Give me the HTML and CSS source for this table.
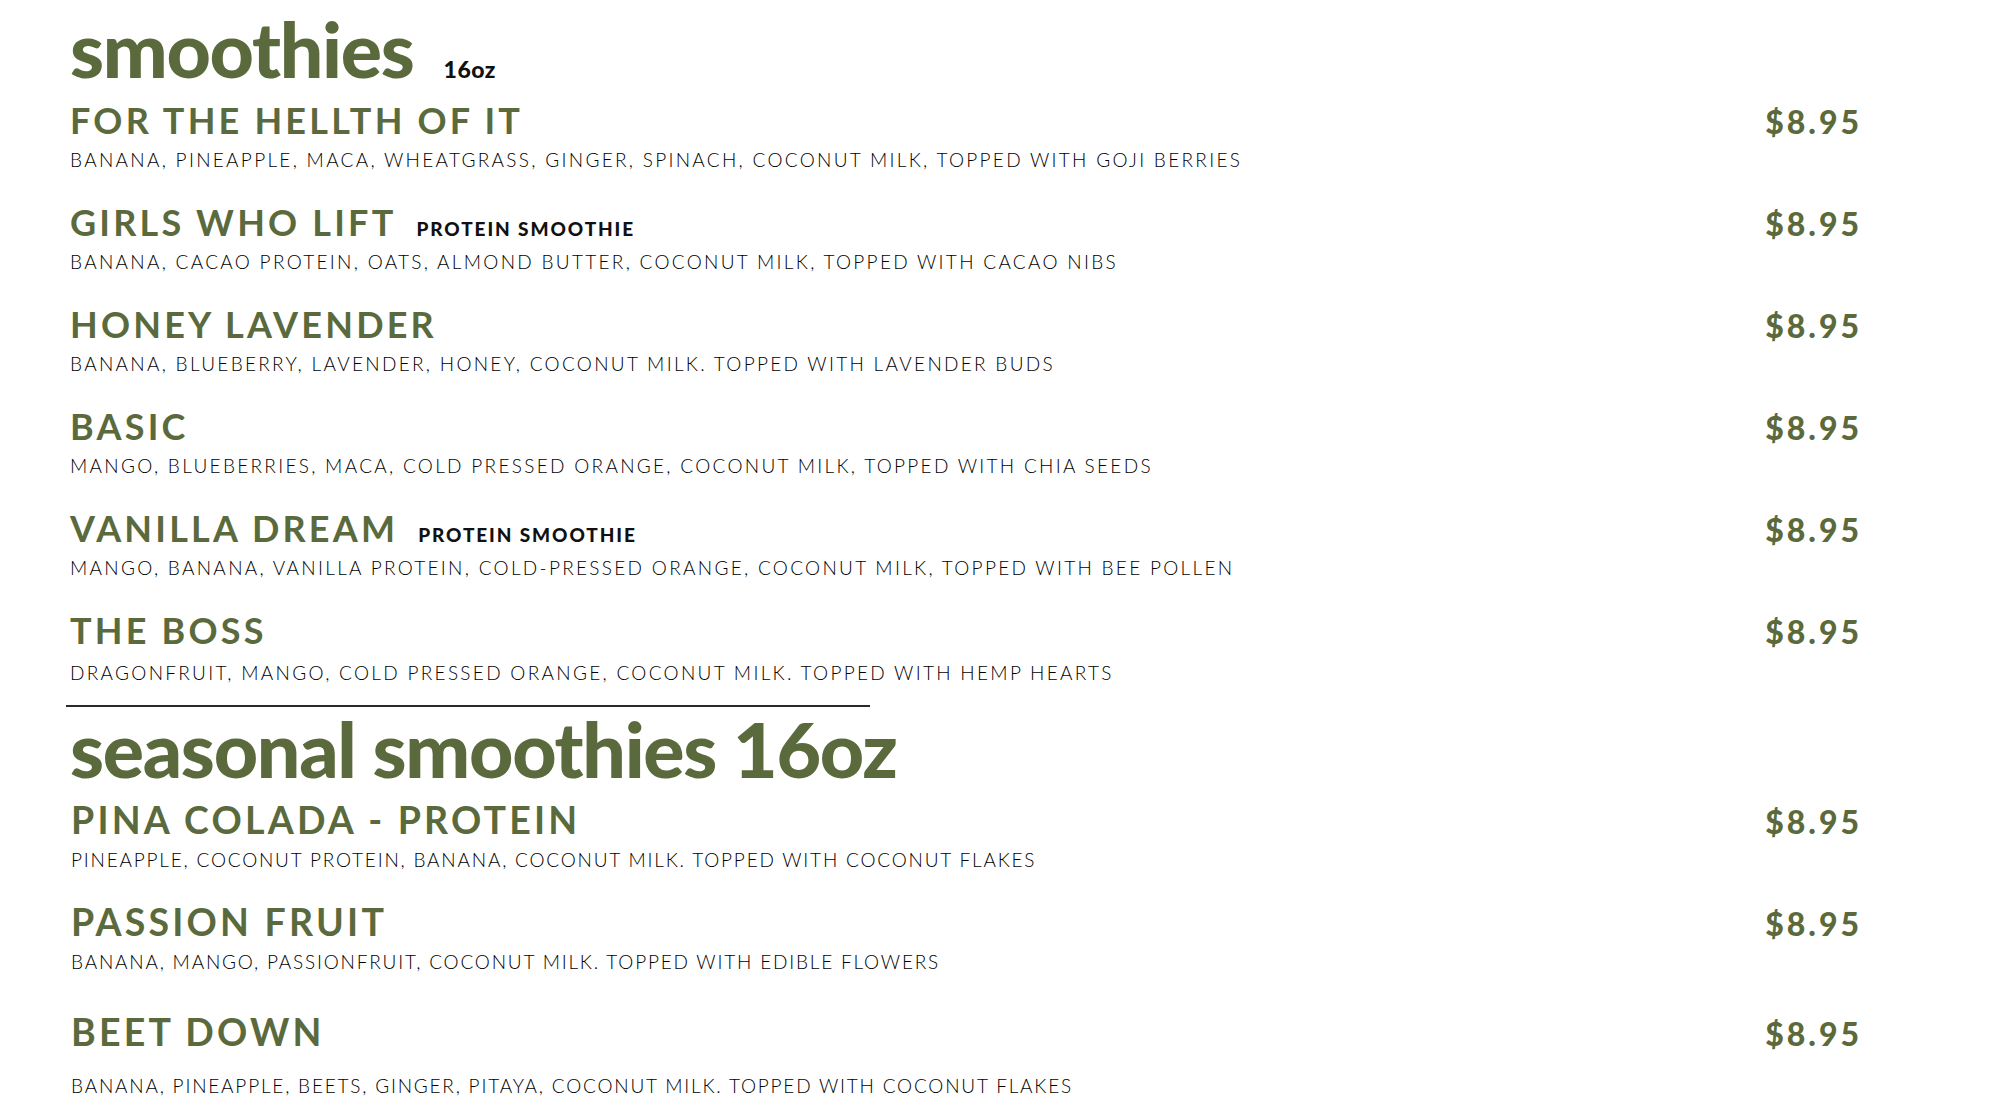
FILE: index.html
```html
<!DOCTYPE html>
<html lang="en">
<head>
<meta charset="utf-8">
<title>Smoothies Menu</title>
<link rel="stylesheet" href="styles.css">
</head>
<body>
<main class="menu">
  <section class="section">
    <h1 class="section-title">smoothies <span class="size">16oz</span></h1>
    <div class="item">
      <div class="item-head"><h2 class="name">FOR THE HELLTH OF IT</h2><span class="price">$8.95</span></div>
      <p class="desc">BANANA, PINEAPPLE, MACA, WHEATGRASS, GINGER, SPINACH, COCONUT MILK, TOPPED WITH GOJI BERRIES</p>
    </div>
    <div class="item">
      <div class="item-head"><h2 class="name">GIRLS WHO LIFT <span class="tag">PROTEIN SMOOTHIE</span></h2><span class="price">$8.95</span></div>
      <p class="desc">BANANA, CACAO PROTEIN, OATS, ALMOND BUTTER, COCONUT MILK, TOPPED WITH CACAO NIBS</p>
    </div>
    <div class="item">
      <div class="item-head"><h2 class="name">HONEY LAVENDER</h2><span class="price">$8.95</span></div>
      <p class="desc">BANANA, BLUEBERRY, LAVENDER, HONEY, COCONUT MILK. TOPPED WITH LAVENDER BUDS</p>
    </div>
    <div class="item">
      <div class="item-head"><h2 class="name">BASIC</h2><span class="price">$8.95</span></div>
      <p class="desc">MANGO, BLUEBERRIES, MACA, COLD PRESSED ORANGE, COCONUT MILK, TOPPED WITH CHIA SEEDS</p>
    </div>
    <div class="item">
      <div class="item-head"><h2 class="name">VANILLA DREAM <span class="tag">PROTEIN SMOOTHIE</span></h2><span class="price">$8.95</span></div>
      <p class="desc">MANGO, BANANA, VANILLA PROTEIN, COLD-PRESSED ORANGE, COCONUT MILK, TOPPED WITH BEE POLLEN</p>
    </div>
    <div class="item item--spaced">
      <div class="item-head"><h2 class="name">THE BOSS</h2><span class="price">$8.95</span></div>
      <p class="desc">DRAGONFRUIT, MANGO, COLD PRESSED ORANGE, COCONUT MILK. TOPPED WITH HEMP HEARTS</p>
    </div>
  </section>
  <hr class="divider">
  <section class="section section--seasonal">
    <h1 class="section-title">seasonal smoothies 16oz</h1>
    <div class="item">
      <div class="item-head"><h2 class="name">PINA COLADA - PROTEIN</h2><span class="price">$8.95</span></div>
      <p class="desc">PINEAPPLE, COCONUT PROTEIN, BANANA, COCONUT MILK. TOPPED WITH COCONUT FLAKES</p>
    </div>
    <div class="item">
      <div class="item-head"><h2 class="name">PASSION FRUIT</h2><span class="price">$8.95</span></div>
      <p class="desc">BANANA, MANGO, PASSIONFRUIT, COCONUT MILK. TOPPED WITH EDIBLE FLOWERS</p>
    </div>
    <div class="item item--loose">
      <div class="item-head"><h2 class="name">BEET DOWN</h2><span class="price">$8.95</span></div>
      <p class="desc">BANANA, PINEAPPLE, BEETS, GINGER, PITAYA, COCONUT MILK. TOPPED WITH COCONUT FLAKES</p>
    </div>
  </section>
</main>
</body>
</html>
```
FILE: styles.css
```css
html, body {
  margin: 0;
  padding: 0;
  background: #ffffff;
}

body {
  font-family: "Lato", "Liberation Sans", sans-serif;
  color: #000000;
}

.menu {
  padding: 7px 138px 0 70px;
}

.section {
  display: flex;
  flex-direction: column;
  gap: 30px;
}

.section-title {
  margin: 0 0 -20px 0;
  font-family: "Lato", sans-serif;
  font-weight: 900;
  font-size: 77px;
  line-height: 83px;
  letter-spacing: -1.3px;
  color: #5b6a3c;
  display: flex;
  align-items: baseline;
  gap: 30px;
}

.size {
  font-size: 23px;
  line-height: 23px;
  font-weight: 900;
  letter-spacing: 0.5px;
  color: #111111;
}

.item {
  display: flex;
  flex-direction: column;
  gap: 6px;
}

.item--spaced {
  gap: 9px;
}

.item--loose {
  margin-top: 8px;
  gap: 20px;
}

.item-head {
  display: flex;
  justify-content: space-between;
  align-items: baseline;
}

.name {
  margin: 0;
  font-size: 36px;
  line-height: 40px;
  font-weight: 700;
  letter-spacing: 3.2px;
  color: #5b6a3c;
  display: flex;
  align-items: baseline;
  gap: 20px;
}

.tag {
  font-size: 19px;
  line-height: 20px;
  font-weight: 900;
  letter-spacing: 1.9px;
  color: #111111;
}

.price {
  font-size: 32px;
  line-height: 40px;
  font-weight: 900;
  letter-spacing: 3px;
  color: #5b6a3c;
}

.desc {
  margin: 0;
  font-size: 19px;
  line-height: 24px;
  font-weight: 300;
  letter-spacing: 2.3px;
  color: #000000;
}

.section--seasonal .item {
  padding-left: 1px;
}

.section--seasonal .name {
  font-size: 37.5px;
  letter-spacing: 3.2px;
}

.section--seasonal .desc {
  letter-spacing: 1.8px;
}

.divider {
  margin: 20px 0 0 -4px;
  width: 804px;
  height: 2px;
  border: 0;
  background: #2a2a2a;
}
```
